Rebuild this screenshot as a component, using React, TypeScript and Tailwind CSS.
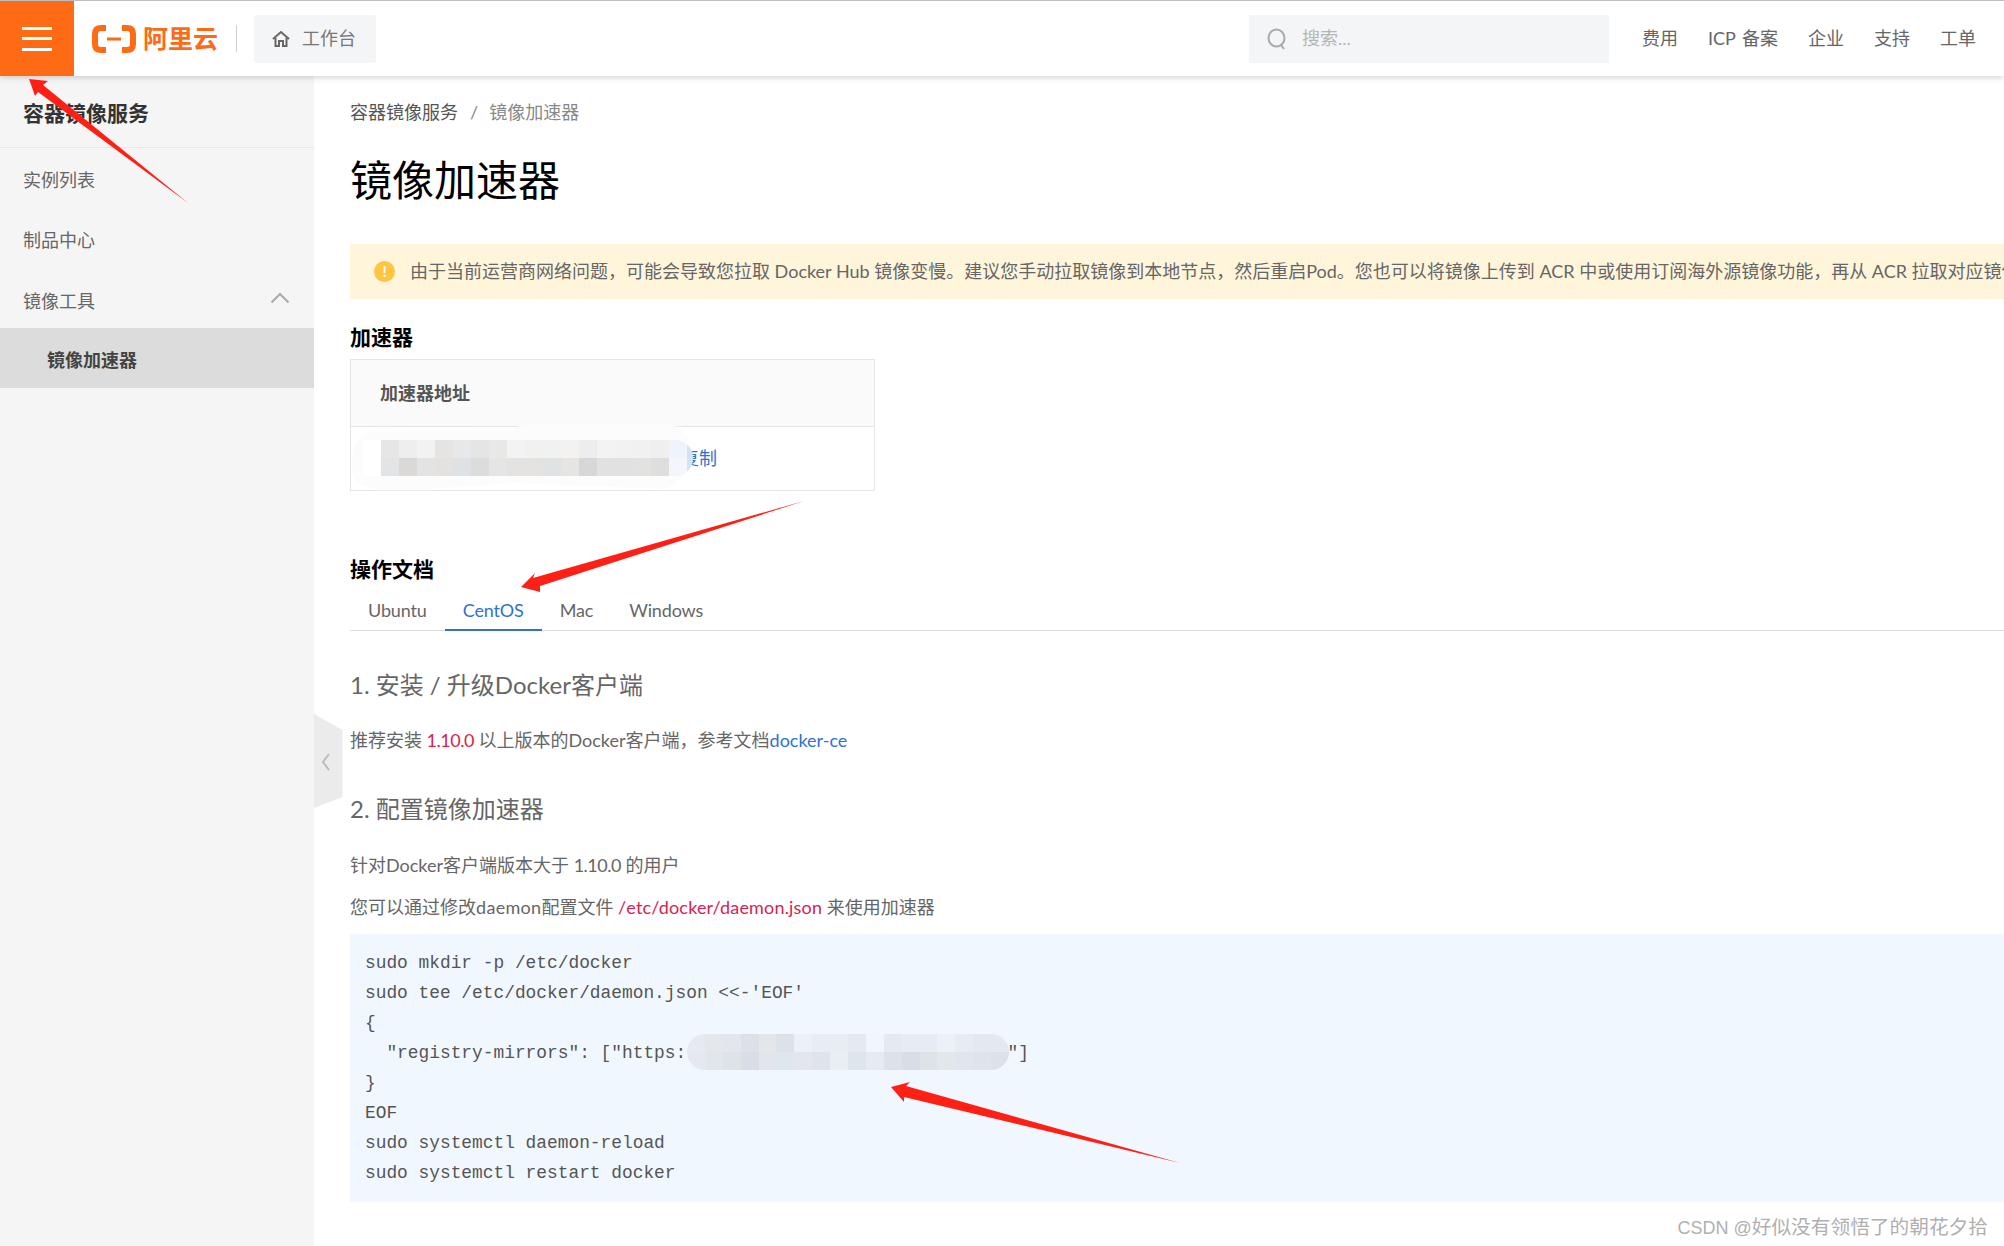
import * as React from "react";

const tabs = ["Ubuntu", "CentOS", "Mac", "Windows"];
const links = ["费用", "ICP 备案", "企业", "支持", "工单"];

// pixelated mosaic covering the address in the table
const tableRows = [
  ["#e6e6e6", "#eeeeee", "#f2f2f2", "#e5e4e2", "#e6e8ea", "#e5e5e5", "#e8e8e6", "#f3f3f3", "#f1f1f0", "#f0f2f2", "#f3f2f0", "#ebedee", "#f3f3f3", "#f2f2f2", "#f1f1f1", "#f0efef", "#eef3fd"],
  ["#e2e4e6", "#dad9d7", "#e3e3e3", "#e3e2e0", "#dfe2e4", "#dbdddc", "#e5e5e5", "#e4e3e1", "#e4e3e1", "#dfe3e4", "#e6e5e2", "#d7d7d7", "#e0e1e1", "#e1e1e1", "#e2e2e1", "#dedede", "#f4f6fc"],
];

// same thing for the url in the code block
const codeRows = [
  ["#e6eaf0", "#e4e8ec", "#e3e7ed", "#dce0e7", "#e3e7ea", "#dde2e9", "#ecf0f8", "#e8ecf4", "#e8ecf3", "#e5e9f1", "#f1f5fc", "#e5e9f1", "#e7ebf3", "#e7ebf3", "#ecf1f8", "#e7ebf3", "#e4e8f0", "#e4e8f0"],
  ["#e5e9ef", "#e1e6ea", "#dee3e8", "#d9dde5", "#e2e6ec", "#e0e6ed", "#e3e7ed", "#dfe4ec", "#e9eef2", "#dfe5ed", "#e6ebf1", "#dde1e9", "#d9dde5", "#dee3e8", "#e2e7ea", "#e1e6ee", "#dfe3ec", "#dde1ea"],
];

function Mosaic({ rows }: { rows: string[][] }) {
  return (
    <div className="flex flex-col">
      {rows.map((row, i) => (
        <div key={i} className="flex">
          {row.map((color, j) => (
            <div key={j} className="w-[18px] h-[18px]" style={{ backgroundColor: color }} />
          ))}
        </div>
      ))}
    </div>
  );
}

function Arrows() {
  return (
    <svg className="absolute left-0 top-0 pointer-events-none z-30" width="2004" height="1246">
      <polygon fill="#ff2015" points="29,79 48,81 43,85 188,203 38,92 35,96" />
      <polygon fill="#ff2015" points="521,587 535,573 533,578 804,501 540,586 540,592" />
      <polygon fill="#ff2015" points="891,1087 910,1082 906,1086 1180,1163 904,1097 904,1102" />
    </svg>
  );
}

function Header() {
  return (
    <header className="relative z-10 flex items-center h-[76px] bg-white border-t border-[#bdbdbd] shadow-[0_2px_6px_rgba(0,0,0,0.16)]">
      <div className="flex flex-col justify-center gap-[7.5px] w-[74px] h-full px-[22px] bg-[#ff6a14]">
        <div className="h-[3px] bg-white" />
        <div className="h-[3px] bg-white" />
        <div className="h-[3px] bg-white" />
      </div>
      <svg className="ml-[18px]" width="44" height="28" viewBox="0 0 44 28" fill="none" stroke="#ff6a14" strokeWidth="6">
        <path d="M14 3 H9 Q3 3 3 9 V19 Q3 25 9 25 H14" />
        <path d="M30 3 H35 Q41 3 41 9 V19 Q41 25 35 25 H30" />
        <path d="M15 14 H29" strokeWidth="3" />
      </svg>
      <span className="ml-[7px] text-[25px] leading-none font-bold text-[#ff6a14]">阿里云</span>
      <div className="ml-[18px] w-px h-[27px] bg-[#cfcfcf]" />
      <div className="flex items-center ml-[17px] w-[122px] h-[48px] pl-[18px] rounded-[3px] bg-[#f4f5f7] text-[18px] text-[#777]">
        <svg width="18" height="18" viewBox="0 0 18 18" fill="none" stroke="#666" strokeWidth="2">
          <path d="M1 9 L9 2 L17 9" />
          <path d="M3.5 8 V16 H7 V11 H11 V16 H14.5 V8" />
        </svg>
        <span className="ml-[12px]">工作台</span>
      </div>
      <div className="flex items-center ml-auto w-[360px] h-[48px] pl-[18px] bg-[#f4f5f7] text-[18px] text-[#b5b5b5]">
        <svg width="20" height="22" viewBox="0 0 20 22" fill="none" stroke="#aaa" strokeWidth="2">
          <ellipse cx="9.5" cy="10" rx="8" ry="8.5" />
          <path d="M14 17 L17 21" />
        </svg>
        <span className="ml-[15px]">搜索...</span>
      </div>
      <nav className="flex gap-[30px] ml-[33px] mr-[28px] text-[18px] text-[#666] whitespace-nowrap [word-spacing:2px]">
        {links.map((l) => (
          <span key={l}>{l}</span>
        ))}
      </nav>
    </header>
  );
}

function Sidebar() {
  return (
    <aside className="relative w-[314px] shrink-0 bg-[#f5f5f5] text-[18px] text-[#666]">
      <div className="flex items-center h-[72px] pl-[23px] pt-[2px] border-b border-[#e8e8e8] text-[21px] font-bold text-[#333]">
        容器镜像服务
      </div>
      <div className="flex items-center h-[60px] pl-[23px] mt-[2px]">实例列表</div>
      <div className="flex items-center h-[60px] pl-[23px]">制品中心</div>
      <div className="flex items-center justify-between h-[58px] pl-[23px] pr-[24px] pt-[4px]">
        <span>镜像工具</span>
        <svg className="-mt-[6px]" width="20" height="12" viewBox="0 0 20 12" fill="none" stroke="#aaa" strokeWidth="2">
          <path d="M1.5 10.5 L10 2 L18.5 10.5" />
        </svg>
      </div>
      <div className="flex items-center h-[60px] pl-[47px] pt-[5px] bg-[#dcdcdc] font-bold text-[#444]">镜像加速器</div>
      {/* collapse handle */}
      <svg className="absolute left-[314px] top-[638px]" width="29" height="95" viewBox="0 0 29 95">
        <polygon fill="#ebebeb" points="0,0 28.5,16 28.5,83 0,94" />
        <path d="M15 40 L9 48 L15 56" fill="none" stroke="#bbb" strokeWidth="2" />
      </svg>
    </aside>
  );
}

export default function App() {
  return (
    <div className="relative flex flex-col h-[1246px] overflow-hidden bg-white font-['Lato','Noto_Sans_CJK_SC',sans-serif]">
      <Header />
      <div className="flex flex-1 min-h-0">
        <Sidebar />
        <main className="flex-1 min-w-0 pl-[36px] pt-[20px] overflow-hidden">
          <div className="flex items-center h-[32px] text-[18px] text-[#555]">
            容器镜像服务
            <span className="ml-[12px] mr-[11px] text-[#888]">/</span>
            <span className="text-[#888]">镜像加速器</span>
          </div>
          <h1 className="flex items-center h-[56px] mt-[24px] text-[42px] leading-none text-black">镜像加速器</h1>

          <div className="flex items-center h-[55px] mt-[36px] pl-[24px] bg-[#fef5da] text-[18px] text-[#666] whitespace-nowrap">
            <div className="flex items-center justify-center w-[21px] h-[21px] shrink-0 rounded-full bg-[#ffc440] text-[15px] font-bold leading-none text-white">
              !
            </div>
            <span className="ml-[15px]">
              由于当前运营商网络问题，可能会导致您拉取 Docker Hub 镜像变慢。建议您手动拉取镜像到本地节点，然后重启Pod。您也可以将镜像上传到 ACR 中或使用订阅海外源镜像功能，再从 ACR 拉取对应镜像
            </span>
          </div>

          <h2 className="flex items-center h-[30px] mt-[23px] pb-[1px] text-[21px] font-bold text-black">加速器</h2>
          <div className="relative w-[525px] mt-[7px] border border-[#e6e6e6] text-[18px]">
            <div className="flex items-center h-[67px] pl-[29px] bg-[#fafafa] border-b border-[#e6e6e6] font-bold text-[#555]">
              加速器地址
            </div>
            <div className="flex items-center h-[63px] pl-[29px]">
              <span className="w-[301px]" />
              <span className="text-[#2f72d0]">复制</span>
            </div>
            {/* address hidden by the author of the screenshot */}
            <svg className="absolute -left-px -top-px" width="350" height="135" viewBox="0 0 350 135">
              <path
                fill="#fcfcfc"
                d="M2 99 Q4 74 25 72 L162 70 Q170 66 180 66 L322 66 Q342 72 342 99 Q340 118 315 130 L162 124 L78 130 L22 130 Q2 125 2 111 Z"
              />
            </svg>
            <div className="absolute left-[12px] top-[80px] flex overflow-hidden rounded-r-[18px]">
              <div className="w-[18px] h-[36px] bg-white" />
              <Mosaic rows={tableRows} />
              <div className="w-[6px] h-[36px] bg-[#d5e2f6]" />
            </div>
          </div>

          <h2 className="flex items-center h-[30px] mt-[63px] pb-[1px] text-[21px] font-bold text-black">操作文档</h2>
          <div className="flex h-[39px] mt-[8px] border-b border-[#dddddd] text-[18px] tracking-[-0.15px] text-[#666]">
            {tabs.map((t) =>
              t === "CentOS" ? (
                <div key={t} className="flex items-center h-[39px] px-[18px] pb-[1px] border-b-2 border-[#2f72d0] text-[#2f72d0]">
                  {t}
                </div>
              ) : (
                <div key={t} className="flex items-center h-[38px] px-[18px] pb-[2px]">
                  {t}
                </div>
              )
            )}
          </div>

          <h3 className="flex items-center h-[36px] mt-[36px] text-[24px] text-[#666]">1. 安装 / 升级Docker客户端</h3>
          <p className="h-[30px] mt-[23px] text-[18px] leading-[28px] text-[#666]">
            推荐安装 <span className="tracking-[-0.5px] text-[#d6244e]">1.10.0</span> 以上版本的Docker客户端，参考文档
            <span className="text-[#2f72d0]">docker-ce</span>
          </p>
          <h3 className="flex items-center h-[36px] mt-[35px] text-[24px] text-[#666]">2. 配置镜像加速器</h3>
          <p className="h-[30px] mt-[24px] text-[18px] leading-[28px] text-[#666]">
            针对Docker客户端版本大于 <span className="tracking-[-0.5px]">1.10.0</span> 的用户
          </p>
          <p className="h-[30px] mt-[12px] text-[18px] leading-[28px] text-[#666]">
            您可以通过修改<span className="tracking-[0.3px]">daemon</span>配置文件{" "}
            <span className="tracking-[0.17px] text-[#d6244e]">/etc/docker/daemon.json</span> 来使用加速器
          </p>

          <div className="relative h-[268px] mt-[11px] pl-[15px] pt-[14px] bg-[#f1f7fe]">
            <pre className="font-['Liberation_Mono',monospace] text-[17.85px] leading-[30px] text-[#555]">
              {`sudo mkdir -p /etc/docker
sudo tee /etc/docker/daemon.json <<-'EOF'
{
  "registry-mirrors": ["https:                              "]
}
EOF
sudo systemctl daemon-reload
sudo systemctl restart docker`}
            </pre>
            <div className="absolute left-[337px] top-[100px] w-[322px] overflow-hidden rounded-[18px]">
              <Mosaic rows={codeRows} />
            </div>
          </div>
        </main>
      </div>
      <Arrows />
      <div className="absolute right-[16px] bottom-[4px] z-20 text-[19.7px] leading-[28px] text-[#b0b0b0] font-['Liberation_Sans','Noto_Sans_CJK_SC',sans-serif]">
        <span className="text-[18px]">CSDN @</span>好似没有领悟了的朝花夕拾
      </div>
    </div>
  );
}
